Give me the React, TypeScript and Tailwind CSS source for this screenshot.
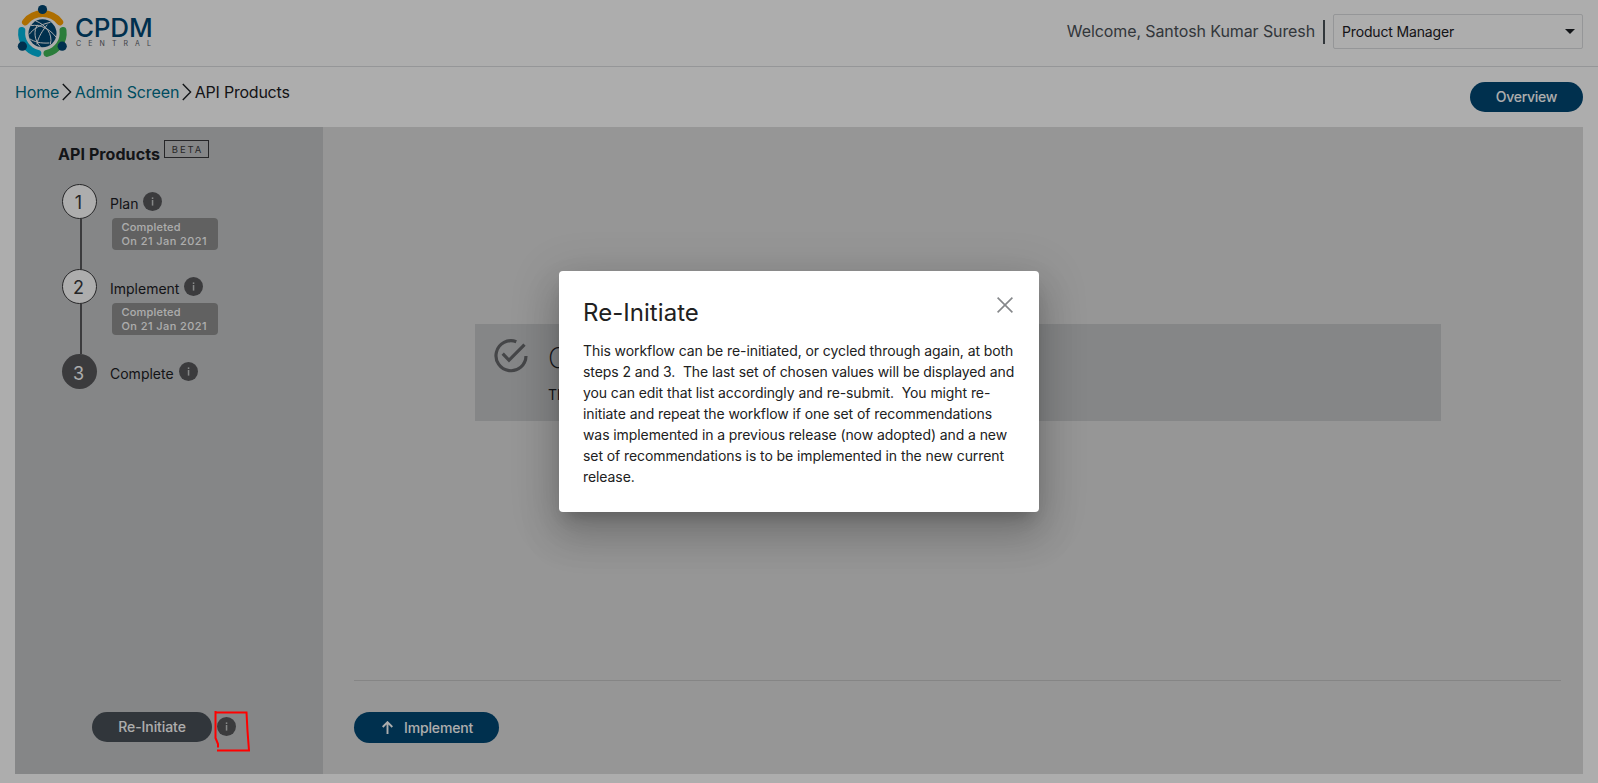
import React from 'react';

function Logo() {
  return (
    <div className="flex items-start">
      <svg width="52" height="56" viewBox="16 3 52 56" fill="none" strokeLinecap="round">
        <path d="M25.4 22 A22 22 0 0 1 59.8 22" stroke="#ffa200" strokeWidth="6.8" />
        <path d="M21.8 30.5 A20.8 20.8 0 0 0 37.8 53.4" stroke="#00b9e2" strokeWidth="7" />
        <path d="M63 30.5 A20.8 20.8 0 0 1 47 53.4" stroke="#40b858" strokeWidth="7" />
        <circle cx="42.5" cy="33.3" r="14" fill="#004774" />
        <g stroke="#fff" strokeWidth="1">
          <path d="M31.5 25.5 C40 24 50 29 56 37" />
          <path d="M36 21 C46 25 53 34 50.5 44" />
          <path d="M29.5 34 C33 29 41 24 50 22.5" />
          <path d="M37.5 25 C33.5 30 34 40 40 46.5" />
          <path d="M30 39 C35 42 40 43.5 49 43" />
          <path d="M47 25 C43 30 38 37 37 44" />
        </g>
        <g fill="#004774">
          <circle cx="42.5" cy="9.5" r="4.6" />
          <circle cx="22.4" cy="46.2" r="4.6" />
          <circle cx="62.2" cy="46.2" r="4.6" />
        </g>
      </svg>
      <div className="ml-[6px] mt-[12px] flex flex-col">
        <span className="pl-[1px] text-[26px] font-medium leading-[25px] tracking-[-0.2px] text-[#004774]">CPDM</span>
        <span className="pl-[2px] text-[7px] leading-[8px] tracking-[7.1px] text-[#5c6269]">CENTRAL</span>
      </div>
    </div>
  );
}

function Chevron() {
  return (
    <svg className="ml-[3px] mr-[2.5px]" width="10" height="18" viewBox="0 0 10 18" fill="none" stroke="#1c2024" strokeWidth="1.4">
      <path d="M0.8 1 L8.6 9 L0.8 17" />
    </svg>
  );
}

function Info() {
  return (
    <svg width="19" height="19" viewBox="0 0 19 19">
      <circle cx="9.5" cy="9.5" r="9.5" fill="#58585b" />
      <rect x="8.8" y="5.4" width="1.5" height="1.6" fill="#c5c7c8" />
      <rect x="8.8" y="8" width="1.5" height="5.6" fill="#c5c7c8" />
    </svg>
  );
}

type StepProps = { n: number; label: string; date?: string; active?: boolean };

function Step({ n, label, date, active }: StepProps) {
  return (
    <div className="flex">
      <div className="flex w-[35px] flex-col items-center">
        <div
          className={
            'flex size-[35px] shrink-0 items-center justify-center rounded-full pr-[2px] text-[18px] ' +
            (active ? 'bg-[#58585b] pt-[3px] text-white' : 'border border-[#39393b] bg-white pt-[2px] text-[#39393b]')
          }
        >
          {n}
        </div>
        {!active && <div className="ml-[2px] h-[50px] w-[2px] bg-[#58585b]" />}
      </div>
      <div className="ml-[13px] pt-[8px]">
        <div className="flex">
          <span className="mt-[2px] text-[14px] leading-[20px] text-[#1c2024]">{label}</span>
          <span className="ml-[5px]">
            <Info />
          </span>
        </div>
        {date && (
          <div className="ml-[2px] mt-[4px] h-[32px] w-[106px] rounded-[4px] bg-[#8f8f8f] pl-[9.5px] pt-[2px] text-[11px] font-medium leading-[14px] text-white">
            <div className="tracking-[0.2px]">Completed</div>
            <div className="tracking-[0.42px]">{date}</div>
          </div>
        )}
      </div>
    </div>
  );
}

const body = [
  'This workflow can be re-initiated, or cycled through again, at both',
  'steps 2 and 3.\u00a0 The last set of chosen values will be displayed and',
  'you can edit that list accordingly and re-submit.\u00a0 You might re-',
  'initiate and repeat the workflow if one set of recommendations',
  'was implemented in a previous release (now adopted) and a new',
  'set of recommendations is to be implemented in the new current',
  'release.',
];

export default function App() {
  return (
    <div className="relative h-[783px] w-[1598px] overflow-hidden bg-white font-['Inter',sans-serif]">
      <header className="flex h-[67px] items-start border-b border-[#dcdee0] pl-[16px] pr-[15px]">
        <div className="pt-[3px]">
          <Logo />
        </div>
        <div className="ml-auto flex items-center pt-[14px]">
          <span className="text-[16px] leading-[35px] tracking-[-0.1px] text-[#4b5157]">Welcome, Santosh Kumar Suresh</span>
          <div className="ml-[8px] h-[24px] w-[2px] bg-[#4b5157]" />
          <div className="ml-[8px] flex h-[35px] w-[250px] items-center rounded-[2px] border border-[#dcdee0] pl-[8px] pr-[7px] text-[14px] tracking-[-0.15px] text-[#1c2024]">
            Product Manager
            <svg className="ml-auto" width="10" height="5" viewBox="0 0 10 5">
              <path d="M0 0 H10 L5 5 Z" fill="#1c2024" />
            </svg>
          </div>
        </div>
      </header>

      <div className="flex h-[60px] items-start justify-between px-[15px]">
        <nav className="flex items-center pt-[13px] text-[16px] leading-[24px] tracking-[-0.13px] text-[#00728e]">
          <span>Home</span>
          <Chevron />
          <span>Admin Screen</span>
          <Chevron />
          <span className="tracking-[-0.22px] text-[#1c2024]">API Products</span>
        </nav>
        <button className="mt-[15px] h-[30px] w-[113px] rounded-full bg-[#004774] pb-[2px] text-[14px] font-medium tracking-[-0.28px] text-white">
          Overview
        </button>
      </div>

      <div className="mx-[15px] flex h-[647px]">
        <aside className="flex w-[308px] flex-col bg-[#c4c6c8]">
          <div className="flex pl-[43px] pt-[13px]">
            <h2 className="mt-[2px] w-[101px] whitespace-nowrap text-[16px] font-bold leading-[24px] tracking-[0.08px] text-[#1c2024]">
              API Products
            </h2>
            <div className="ml-[5px] flex h-[18px] w-[45px] items-center justify-center border border-[#39393b] pl-[2px] pt-[3px] text-[9.5px] tracking-[1.9px] text-[#39393b]">
              BETA
            </div>
          </div>
          <div className="flex flex-col pl-[47px] pt-[18px]">
            <Step n={1} label="Plan" date="On 21 Jan 2021" />
            <Step n={2} label="Implement" date="On 21 Jan 2021" />
            <Step n={3} label="Complete" active />
          </div>
          <div className="mb-[32px] mt-auto flex items-center pl-[77px]">
            <button className="h-[30px] w-[120px] rounded-full bg-[#495057] pb-[2px] text-[14px] font-medium tracking-[-0.08px] text-white">
              Re-Initiate
            </button>
            <span className="mb-[1px] ml-[5px]">
              <Info />
            </span>
          </div>
        </aside>

        <main className="flex flex-1 flex-col bg-[#dedede]">
          <section className="ml-[152px] mt-[197px] flex h-[97px] w-[966px] bg-[#c4c6c8] pl-[19px] pt-[14.5px]">
            <svg width="34" height="34" viewBox="0 0 34 34" fill="none" stroke="#66676a" strokeWidth="3.2">
              <path d="M22.3 2.7 A15 15 0 1 0 32 17" />
              <path d="M8.7 14.7 L15 21.2 L30.5 5.7" />
            </svg>
            <div className="ml-[20px]">
              <h1 className="text-[28px] font-extralight leading-[38px] text-[#1c2024]">Complete</h1>
              <p className="mt-[8.5px] text-[14px] leading-[20px] text-[#1c2024]">This workflow is complete.</p>
            </div>
          </section>
          <div className="ml-[31px] mr-[22px] mt-auto border-t border-[#c5c5c5] pb-[31px] pt-[31px]">
            <button className="flex h-[31px] w-[145px] items-center rounded-full bg-[#004774] pl-[28px] text-[14px] font-medium tracking-[-0.15px] text-white">
              <svg width="11" height="13" viewBox="0 0 11 13" fill="none" stroke="#fff" strokeWidth="1.9">
                <path d="M5.5 13 V1.5 M0.7 6 L5.5 1.2 L10.3 6" />
              </svg>
              <span className="mb-[1px] ml-[11px]">Implement</span>
            </button>
          </div>
        </main>
      </div>

      <div className="absolute inset-0 bg-black/32">
        <div
          role="dialog"
          className="ml-[559px] mt-[271px] h-[241px] w-[480px] rounded-[4px] bg-white px-[24px] pt-[26px] text-[#212121] shadow-[0_11px_15px_-7px_rgba(0,0,0,0.2),0_24px_38px_3px_rgba(0,0,0,0.14),0_9px_46px_8px_rgba(0,0,0,0.12)]"
        >
          <div className="flex items-start justify-between">
            <h3 className="text-[24px] leading-[32px] tracking-[0.05px]">Re-Initiate</h3>
            <svg className="mr-[2px]" width="16" height="16" viewBox="0 0 16 16" stroke="#85878a" strokeWidth="1.6">
              <path d="M0.6 0.6 L15.4 15.4 M15.4 0.6 L0.6 15.4" />
            </svg>
          </div>
          <div className="mt-[11px] whitespace-nowrap text-[14px] leading-[21px] tracking-[-0.085px]">
            {body.map((line) => (
              <div key={line}>{line}</div>
            ))}
          </div>
        </div>
      </div>

      <svg className="absolute left-[213px] top-[709px]" width="38" height="44" viewBox="0 0 38 44" fill="none" stroke="#ff0000" strokeWidth="2">
        <path d="M2.5 2 V29 L5 35 V38.5 M2 3.5 H33.5 L34.5 22 L36 41.5 H4" />
      </svg>
    </div>
  );
}
